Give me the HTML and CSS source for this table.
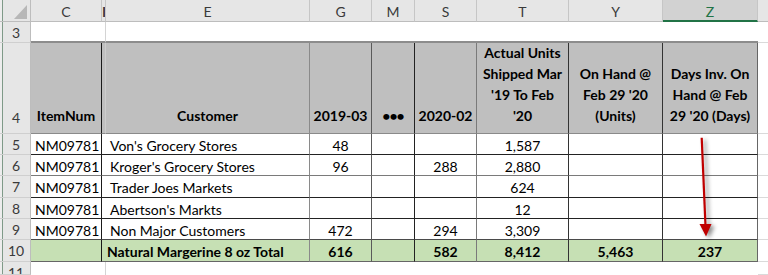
FILE: index.html
```html
<!DOCTYPE html>
<html>
<head>
<meta charset="utf-8">
<link rel="stylesheet" href="styles.css">
</head>
<body>
<div class="sheet">
  <!-- column headers -->
  <div class="corner"><svg class="tri" width="13" height="14" viewBox="0 0 13 14"><polygon points="13,0 13,14 0,14" fill="#b7b7b7"/></svg></div>
  <div class="ch">C</div>
  <div class="ch ci">I</div>
  <div class="ch">E</div>
  <div class="ch">G</div>
  <div class="ch">M</div>
  <div class="ch">S</div>
  <div class="ch">T</div>
  <div class="ch">Y</div>
  <div class="ch sel">Z</div>
  <div class="ch spare"></div>

  <!-- row 3 -->
  <div class="rh">3</div>
  <div class="top s2"></div>
  <div class="top s7"></div>
  <div class="sp"></div>

  <!-- row 4 header -->
  <div class="rh tall">4</div>
  <div class="h cC">ItemNum</div>
  <div class="h cI hi"></div>
  <div class="h cE">Customer</div>
  <div class="h cG">2019-03</div>
  <div class="h cM"><span class="dots">•••</span></div>
  <div class="h cS">2020-02</div>
  <div class="h cT">Actual Units<br>Shipped Mar<br>'19 To Feb<br>'20</div>
  <div class="h cY">On Hand @<br>Feb 29 '20<br>(Units)</div>
  <div class="h cZ">Days Inv. On<br>Hand @ Feb<br>29 '20 (Days)</div>
  <div class="sp"></div>

  <!-- row 5 -->
  <div class="rh">5</div>
  <div class="d cC r5 l">NM09781</div>
  <div class="d cI r5"></div>
  <div class="d cE r5 l">Von's Grocery Stores</div>
  <div class="d cG r5">48</div>
  <div class="d cM r5"></div>
  <div class="d cS r5"></div>
  <div class="d cT r5">1,587</div>
  <div class="d cY r5"></div>
  <div class="d cZ r5"></div>
  <div class="sp"></div>

  <!-- row 6 -->
  <div class="rh">6</div>
  <div class="d cC r6 l">NM09781</div>
  <div class="d cI r6"></div>
  <div class="d cE r6 l">Kroger's Grocery Stores</div>
  <div class="d cG r6">96</div>
  <div class="d cM r6"></div>
  <div class="d cS r6">288</div>
  <div class="d cT r6">2,880</div>
  <div class="d cY r6"></div>
  <div class="d cZ r6"></div>
  <div class="sp"></div>

  <!-- row 7 -->
  <div class="rh">7</div>
  <div class="d cC r7 l">NM09781</div>
  <div class="d cI r7"></div>
  <div class="d cE r7 l">Trader Joes Markets</div>
  <div class="d cG r7"></div>
  <div class="d cM r7"></div>
  <div class="d cS r7"></div>
  <div class="d cT r7">624</div>
  <div class="d cY r7"></div>
  <div class="d cZ r7"></div>
  <div class="sp"></div>

  <!-- row 8 -->
  <div class="rh">8</div>
  <div class="d cC r8 l">NM09781</div>
  <div class="d cI r8"></div>
  <div class="d cE r8 l">Abertson's Markts</div>
  <div class="d cG r8"></div>
  <div class="d cM r8"></div>
  <div class="d cS r8"></div>
  <div class="d cT r8">12</div>
  <div class="d cY r8"></div>
  <div class="d cZ r8"></div>
  <div class="sp"></div>

  <!-- row 9 -->
  <div class="rh">9</div>
  <div class="d cC r9 l">NM09781</div>
  <div class="d cI r9"></div>
  <div class="d cE r9 l">Non Major Customers</div>
  <div class="d cG r9">472</div>
  <div class="d cM r9"></div>
  <div class="d cS r9">294</div>
  <div class="d cT r9">3,309</div>
  <div class="d cY r9"></div>
  <div class="d cZ r9"></div>
  <div class="sp"></div>

  <!-- row 10 total -->
  <div class="rh">10</div>
  <div class="d tot cC r10"></div>
  <div class="d tot cI r10"></div>
  <div class="d tot cE r10 lt">Natural Margerine 8 oz Total</div>
  <div class="d tot cG r10">616</div>
  <div class="d tot cM r10"></div>
  <div class="d tot cS r10">582</div>
  <div class="d tot cT r10">8,412</div>
  <div class="d tot cY r10">5,463</div>
  <div class="d tot cZ r10">237</div>
  <div class="sp"></div>

  <!-- row 11 -->
  <div class="rh">11</div>
  <div class="bot s2"></div>
  <div class="bot s7"></div>
  <div class="sp"></div>

  <svg class="arrow" width="30" height="115" viewBox="0 0 30 115">
    <g class="arrow-g">
      <line x1="11.7" y1="7.7" x2="15.5" y2="96" stroke="#c00000" stroke-width="2.2"/>
      <polygon points="9.5,94 21.5,94 16,106.5" fill="#c00000"/>
    </g>
  </svg>
</div>
</body>
</html>
```

FILE: styles.css
```css
body {
  margin: 0;
  background: #ffffff;
  font-family: Lato, "Liberation Sans", sans-serif;
  font-size: 14px;
  color: #000000;
}

.sheet {
  position: relative;
  display: grid;
  grid-template-columns: 31px 71px 4px 204px 62px 43px 62px 92px 94px 95px 10px;
  grid-template-rows: 22px 21px 91px 21px 21px 22px 21px 21px 22px 13px;
  width: 768px;
  height: 275px;
  overflow: hidden;
}

.sheet > div {
  box-sizing: border-box;
  white-space: nowrap;
}

/* column letters */
.ch {
  background: #e6e6e6;
  border-right: 1px solid #c6c6c6;
  border-bottom: 1px solid #bdbdbd;
  text-align: center;
  line-height: 21px;
  padding-top: 1px;
  color: #3a3a3a;
  overflow: hidden;
}
.ch.ci {
  text-indent: 0;
  font-weight: 700;
  color: #3a3a3a;
}
.ch.sel {
  background: #d2d2d2;
  color: #217346;
  border-bottom: 2px solid #217346;
}
.ch.spare {
  border-right: none;
}

.corner {
  display: flex;
  justify-content: flex-end;
  align-items: flex-end;
  padding: 0 3px 2px 0;
  border-right: 1px solid #bdbdbd;
  border-bottom: 1px solid #bdbdbd;
  background: linear-gradient(to right, #ededed 2px, #7f9a88 2px, #7f9a88 3px, #e6e6e6 3px);
}

/* row numbers */
.rh {
  background: linear-gradient(to right, #ededed 2px, #7f9a88 2px, #7f9a88 3px, #e6e6e6 3px);
  border-right: 1px solid #bdbdbd;
  border-bottom: 1px solid #cfcfcf;
  text-align: center;
  padding-left: 2px;
  line-height: 20px;
  padding-top: 1px;
  color: #3a3a3a;
  overflow: hidden;
}
.rh.tall {
  display: flex;
  align-items: flex-end;
  justify-content: center;
  padding-bottom: 5px;
}

/* row 3 and row 11 blanks */
.s2 { grid-column: span 2; }
.s7 { grid-column: span 7; }
.top {
  border-bottom: 2px solid #8c8c8c;
}
.top.s2, .bot.s2 {
  border-right: 1px solid #d4d4d4;
}
.sp {
  border-bottom: 1px solid #dadada;
}

/* table header row */
.h {
  background: #bfbfbf;
  font-weight: 700;
  line-height: 21px;
  text-align: center;
  display: flex;
  flex-direction: column;
  justify-content: flex-end;
  padding-bottom: 7px;
  border-bottom: 1px solid #8a8a8a;
}
.h.hi {
  border-right: 1px solid #cdcdcd;
}
.dots {
  letter-spacing: -1px;
}

/* data cells */
.d {
  text-align: center;
  line-height: 20px;
  padding-top: 2px;
  background: #ffffff;
  border-bottom: 1px solid #222222;
}
.d.l {
  text-align: left;
  padding-left: 4px;
}
.tot {
  background: #c6e0b4;
  font-weight: 700;
}
.tot.lt {
  text-align: left;
  padding-left: 1px;
}

/* column right borders */
.cC { border-right: 1px solid #1a1a1a; }
.cE { border-right: 1px solid #8a8a8a; }
.cG { border-right: 1px solid #5a5a5a; }
.cM { border-right: 1px solid #222222; }
.cS { border-right: 1px solid #7a7a7a; }
.cT { border-right: 1px solid #333333; }
.cY { border-right: 1px solid #333333; }
.cZ { border-right: 1px solid #666666; }

/* row bottom borders */
.r5 { border-bottom-color: #222222; }
.r6 { border-bottom-color: #7a7a7a; }
.r7 { border-bottom-color: #222222; }
.r8 { border-bottom-color: #222222; }
.r9 { border-bottom-color: #4a4a4a; }
.r10 { border-bottom-color: #666666; }

.arrow {
  position: absolute;
  left: 690px;
  top: 130px;
}
.arrow-g {
  filter: drop-shadow(3px 2px 2px rgba(0, 0, 0, 0.45));
}
```
